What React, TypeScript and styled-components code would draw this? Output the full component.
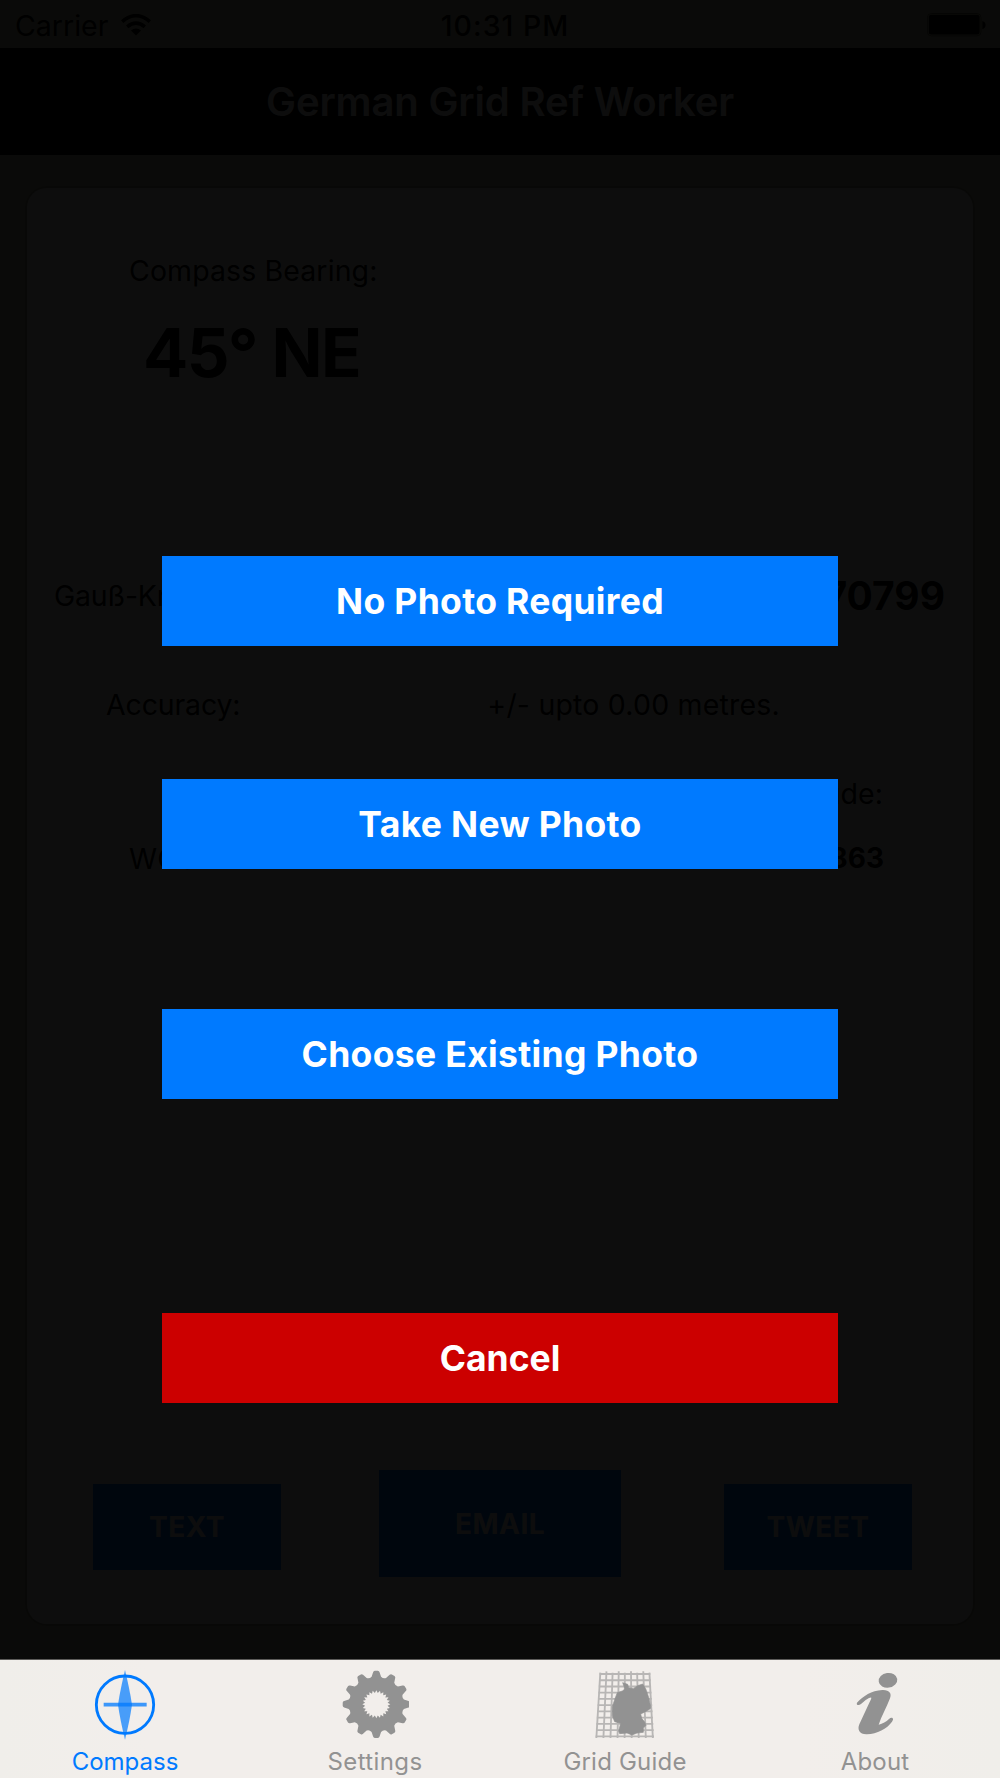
import React from "react";
import styled, { createGlobalStyle } from "styled-components";

const GlobalStyle = createGlobalStyle`
  * { box-sizing: border-box; }
  body { margin: 0; background: #0a0a08; }
  button { border: 0; padding: 0; font: inherit; cursor: pointer; }
`;

const Screen = styled.div`
  position: relative;
  display: flex;
  flex-direction: column;
  width: 1000px;
  height: 1778px;
  overflow: hidden;
  background: #c8c8a5;
  color: #000;
  font-family: Inter, "Liberation Sans", sans-serif;
  font-size: 28.5px;
  white-space: nowrap;
`;

const StatusBar = styled.header`
  display: grid;
  grid-template-columns: 1fr auto 1fr;
  align-items: center;
  height: 48px;
  padding: 2px 14px 0 15px;
`;

const Carrier = styled.div`
  display: flex;
  align-items: center;
  gap: 13px;
`;

const Clock = styled.div`
  font-weight: 500;
  letter-spacing: 1px;
  padding-left: 9px;
`;

const BatterySlot = styled.div`
  display: flex;
  justify-content: flex-end;
`;

const NavBar = styled.nav`
  display: flex;
  align-items: center;
  justify-content: center;
  height: 107px;
  background: #000;
  color: #fff;
`;

const Title = styled.h1`
  margin: 0;
  font-size: 40px;
  font-weight: 600;
  letter-spacing: -0.15px;
`;

const Content = styled.main`
  flex: 1;
  padding: 33px 27px 35px;
`;

const Card = styled.section`
  display: flex;
  flex-direction: column;
  height: 100%;
  padding-top: 62px;
  border-radius: 20px;
  background: #fff;
  box-shadow: 0 0 0 2px #a0a08c;
`;

const Row = styled.div<{ $gap?: number; $height?: number; $left?: number; $right?: number }>`
  display: flex;
  justify-content: space-between;
  align-items: center;
  flex: none;
  height: ${(p) => p.$height ?? 40}px;
  margin-top: ${(p) => p.$gap ?? 0}px;
  padding-left: ${(p) => p.$left ?? 0}px;
  padding-right: ${(p) => p.$right ?? 0}px;
`;

const Label = styled.span<{ $spacing?: number }>`
  letter-spacing: ${(p) => p.$spacing ?? 0.1}px;
`;

const Value = styled.span<{ $size: number; $spacing?: number }>`
  font-size: ${(p) => p.$size}px;
  font-weight: 700;
  letter-spacing: ${(p) => p.$spacing ?? 0}px;
`;

const Actions = styled.div`
  display: flex;
  align-items: flex-start;
  margin-top: 592px;
  padding-left: 66px;
`;

const Action = styled.button<{ $large?: boolean; $gap?: number }>`
  flex: none;
  width: ${(p) => (p.$large ? 242 : 188)}px;
  height: ${(p) => (p.$large ? 107 : 86)}px;
  margin-top: ${(p) => (p.$large ? 0 : 14)}px;
  margin-left: ${(p) => p.$gap ?? 0}px;
  background: #007aff;
  color: #fff;
  font-size: 28px;
  font-weight: 700;
  letter-spacing: 0.5px;
`;

const Overlay = styled.div`
  position: absolute;
  inset: 0 0 119px;
  display: flex;
  flex-direction: column;
  align-items: center;
  padding-top: 556px;
  background: rgba(0, 0, 0, 0.95);
`;

const Choice = styled.button<{ $gap?: number; $danger?: boolean }>`
  flex: none;
  width: 676px;
  height: 90px;
  margin-top: ${(p) => p.$gap ?? 0}px;
  padding-top: 1px;
  background: ${(p) => (p.$danger ? "#cc0000" : "#007aff")};
  color: #fff;
  font-size: 35.5px;
  font-weight: 700;
  letter-spacing: ${(p) => (p.$danger ? 0 : 0.33)}px;
`;

const TabBar = styled.footer`
  display: grid;
  grid-template-columns: repeat(4, 1fr);
  height: 119px;
  border-top: 1px solid #5c5b59;
  background: linear-gradient(90deg, #f0eeea, #f2eeeb 15%, #f2eeeb 80%, #f0eeea);
`;

const Tab = styled.a<{ $active?: boolean }>`
  display: flex;
  flex-direction: column;
  align-items: center;
  padding-top: 10px;
  color: ${(p) => (p.$active ? "#007aff" : "#929292")};
  font-size: 24px;
  svg { display: block; }
`;

const TabLabel = styled.span<{ $spacing: number }>`
  height: 30px;
  margin-top: 7px;
  line-height: 30px;
  letter-spacing: ${(p) => p.$spacing}px;
`;

const WifiIcon = () => (
  <svg width="30" height="22" viewBox="0 0 30 22">
    <path d="M15 21.5 L10 16.5 Q15 12.5 20 16.5Z" fill="#000" />
    <path d="M6.2 12.8 Q15 5.4 23.8 12.8" fill="none" stroke="#000" strokeWidth="3.6" />
    <path d="M1.2 7.6 Q15 -4.2 28.8 7.6" fill="none" stroke="#000" strokeWidth="3.6" />
  </svg>
);

const BatteryIcon = () => (
  <svg width="59" height="24" viewBox="0 0 59 24">
    <rect x="0.4" y="0.5" width="53.6" height="22.4" rx="4" fill="none" stroke="#000" strokeWidth="0.8" opacity="0.6" />
    <rect x="1.8" y="1.8" width="50.8" height="19.6" rx="2.5" fill="#000" />
    <path d="M55.4 8 Q58.6 9 58.6 12 T55.4 16Z" fill="#000" />
  </svg>
);

const CompassIcon = () => (
  <svg width="68" height="70" viewBox="0 0 204 210" fill="currentColor">
    <circle cx="102" cy="104" r="86" fill="none" stroke="currentColor" strokeWidth="8.5" />
    <path d="M102 0 Q116 58 123 104 Q116 152 102 209 Q88 152 81 104 Q88 58 102 0Z" opacity="0.7" />
    <path d="M38 104H167" stroke="currentColor" strokeWidth="11" opacity="0.75" />
  </svg>
);

const polar = (cx: number, cy: number, r: number, a: number) =>
  `${(cx + r * Math.sin(a)).toFixed(1)} ${(cy - r * Math.cos(a)).toFixed(1)}`;

const gearPath = () => {
  const teeth: string[] = [];
  for (let i = 0; i < 12; i++) {
    const a = (i * Math.PI) / 6;
    const p = (r: number, d: number) => polar(106, 103, r, a + d);
    teeth.push(
      `${i ? "L" : "M"}${p(84, -0.17)} L${p(97, -0.1)} Q${p(101, -0.085)} ${p(101, -0.045)}` +
        ` L${p(101, 0.045)} Q${p(101, 0.085)} ${p(97, 0.1)} L${p(84, 0.17)} Q${p(79, 0.2618)} ${p(84, 0.3536)}`
    );
  }
  const hole: string[] = [];
  for (let i = 0; i < 48; i++) {
    hole.push(`${i ? "L" : "M"}${polar(106, 103, i % 2 ? 34 : 42, (i * Math.PI) / 24)}`);
  }
  return `${teeth.join(" ")}Z ${hole.join(" ")}Z`;
};

const GearIcon = () => (
  <svg width="68" height="70" viewBox="0 0 204 210">
    <path d={gearPath()} fill="currentColor" fillRule="evenodd" />
  </svg>
);

const GridGuideIcon = () => (
  <svg width="68" height="70" viewBox="0 0 204 210">
    <g stroke="currentColor" strokeWidth="5.5" opacity="0.6">
      {Array.from({ length: 9 }, (_, i) => (
        <line key={`v${i}`} x1={28 + i * 18.4} y1={i % 2 ? 4 : 8} x2={16 + i * 21.2} y2="204" />
      ))}
      {Array.from({ length: 11 }, (_, i) => (
        <line key={`h${i}`} x1={26 - i * 1.2} y1={12 + i * 18.7} x2={178 + i * 1.1} y2={12 + i * 18.7} />
      ))}
    </g>
    <path
      d="M95 38 L110 43 L113 53 L127 56 L140 47 L155 42 L164 56 L169 70 L174 86 L179 110 L178 116 L163 125 L149 132 L152 145 L161 156 L165 166 L157 174 L157 187 L138 189 L123 195 L108 189 L86 191 L83 184 L89 160 L71 155 L64 137 L64 110 L72 86 L79 68 L94 63 L102 57Z"
      fill="currentColor"
      stroke="currentColor"
      strokeWidth="2"
      strokeLinejoin="round"
    />
  </svg>
);

const AboutIcon = () => (
  <svg width="68" height="70" viewBox="0 0 204 210" fill="currentColor">
    <ellipse cx="141" cy="31" rx="28" ry="22" transform="rotate(-8 141 31)" />
    <path d="M48 98 C67 78 91 62 124 60 C145 59 153 70 147 85 C137 112 121 139 113 164 Q131 160 144 147 C152 139 161 145 153 155 C138 176 108 192 78 193 C56 194 48 180 55 163 L86 96 C93 83 93 80 84 84 Q73 89 60 102 C52 108 45 104 48 98Z" />
  </svg>
);

export default function App() {
  return (
    <Screen>
      <GlobalStyle />
      <StatusBar>
        <Carrier>Carrier <WifiIcon /></Carrier>
        <Clock>10:31 PM</Clock>
        <BatterySlot><BatteryIcon /></BatterySlot>
      </StatusBar>
      <NavBar><Title>German Grid Ref Worker</Title></NavBar>
      <Content>
        <Card>
          <Row $left={102}><Label>Compass Bearing:</Label></Row>
          <Row $gap={22} $height={80} $left={116}><Value $size={67} $spacing={-1.5}>45° NE</Value></Row>
          <Row $gap={178} $height={50} $left={27} $right={28}>
            <Label $spacing={-0.2}>Gauß-Krüger:</Label>
            <Value $size={39}>70799</Value>
          </Row>
          <Row $gap={64} $left={79} $right={193}>
            <Label $spacing={-0.15}>Accuracy:</Label>
            <Label $spacing={0.2}>+/- upto 0.00 metres.</Label>
          </Row>
          <Row $gap={49} $right={90}><span /><Label>Longitude:</Label></Row>
          <Row $gap={25} $left={102} $right={89}>
            <Label>WGS84</Label>
            <Value $size={28}>863</Value>
          </Row>
          <Actions>
            <Action>TEXT</Action>
            <Action $large $gap={98}>EMAIL</Action>
            <Action $gap={103}>TWEET</Action>
          </Actions>
        </Card>
      </Content>
      <TabBar>
        <Tab $active><CompassIcon /><TabLabel $spacing={0}>Compass</TabLabel></Tab>
        <Tab><GearIcon /><TabLabel $spacing={0.4}>Settings</TabLabel></Tab>
        <Tab><GridGuideIcon /><TabLabel $spacing={0.2}>Grid Guide</TabLabel></Tab>
        <Tab><AboutIcon /><TabLabel $spacing={0.2}>About</TabLabel></Tab>
      </TabBar>
      <Overlay>
        <Choice>No Photo Required</Choice>
        <Choice $gap={133}>Take New Photo</Choice>
        <Choice $gap={140}>Choose Existing Photo</Choice>
        <Choice $gap={214} $danger>Cancel</Choice>
      </Overlay>
    </Screen>
  );
}
